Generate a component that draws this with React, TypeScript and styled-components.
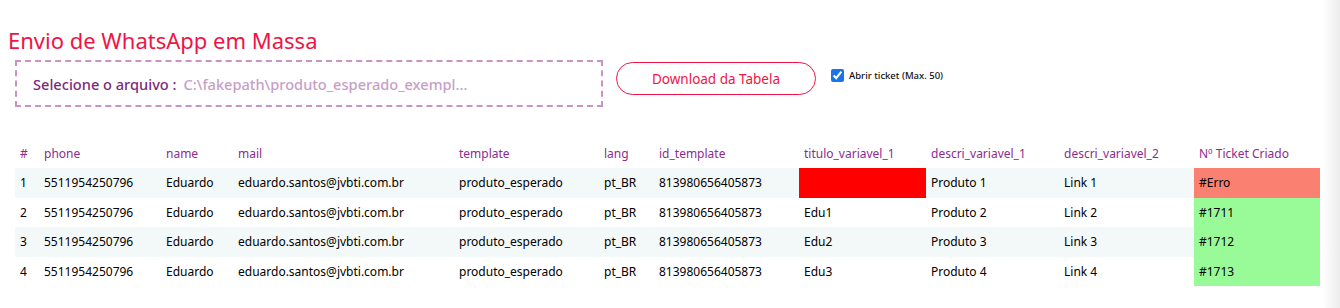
import { FC } from "react";
import styled, { createGlobalStyle } from "styled-components";

const GlobalStyle = createGlobalStyle`
  body {
    margin: 0;
    font-family: "Noto Sans", "Open Sans", sans-serif;
    background: linear-gradient(to right, #ffffff 1323px, #ececec 1340px);
    min-height: 308px;
  }
`;

const Page = styled.div`
  padding: 26px 0 0 0;
`;

const Title = styled.h1`
  margin: 0 0 0 8px;
  font-size: 22px;
  line-height: 28px;
  font-weight: 400;
  color: #f01446;
`;

const Toolbar = styled.div`
  display: flex;
  align-items: flex-start;
  margin: 6px 0 0 15px;
`;

const FileBox = styled.label`
  box-sizing: border-box;
  width: 588px;
  height: 47px;
  border: 2px dashed #c993c6;
  display: flex;
  align-items: center;
  padding: 0 16px;
  gap: 7px;
  font-size: 14.6px;
  font-weight: 500;
  white-space: nowrap;
`;

const FileLabel = styled.span`
  color: #7b2a7b;
`;

const FileName = styled.span`
  color: #c79ec7;
`;

const DownloadButton = styled.button`
  margin: 2px 0 0 13px;
  width: 200px;
  height: 33px;
  border: 1px solid #f01446;
  border-radius: 17px;
  background: #fff;
  color: #f01446;
  font-family: inherit;
  font-size: 13.5px;
`;

const TicketCheck = styled.label`
  display: flex;
  align-items: flex-start;
  gap: 5px;
  margin: 9px 0 0 15px;
  font-size: 9.5px;
  font-weight: 500;
  color: #111;

  input {
    margin: 0;
    width: 13px;
    height: 13px;
    accent-color: #1a73e8;
  }
`;

const Table = styled.table`
  margin: 31px 0 0 15px;
  border-collapse: collapse;
  table-layout: fixed;
  width: 1305px;
  font-size: 12px;
`;

const HeadCell = styled.th`
  height: 30px;
  padding: 0 5px;
  text-align: left;
  font-weight: 400;
  color: #8e2c8e;
  vertical-align: middle;
`;

const Row = styled.tr<{ $striped: boolean }>`
  height: 29.5px;
  background: ${(p) => (p.$striped ? "#f3f8f8" : "#fff")};
`;

const Cell = styled.td<{ $bg?: string }>`
  padding: 0 5px;
  color: #000;
  white-space: nowrap;
  overflow: hidden;
  background: ${(p) => p.$bg ?? "transparent"};
`;

const columns = [
  { key: "#", width: 24 },
  { key: "phone", width: 122 },
  { key: "name", width: 72 },
  { key: "mail", width: 221 },
  { key: "template", width: 145 },
  { key: "lang", width: 55 },
  { key: "id_template", width: 145 },
  { key: "titulo_variavel_1", width: 127 },
  { key: "descri_variavel_1", width: 133 },
  { key: "descri_variavel_2", width: 135 },
  { key: "Nº Ticket Criado", width: 126 },
];

const rows = [
  { titulo: "", descri1: "Produto 1", descri2: "Link 1", ticket: "#Erro", error: true },
  { titulo: "Edu1", descri1: "Produto 2", descri2: "Link 2", ticket: "#1711", error: false },
  { titulo: "Edu2", descri1: "Produto 3", descri2: "Link 3", ticket: "#1712", error: false },
  { titulo: "Edu3", descri1: "Produto 4", descri2: "Link 4", ticket: "#1713", error: false },
];

const App: FC = () => {
  return (
    <Page>
      <GlobalStyle />
      <Title>Envio de WhatsApp em Massa</Title>
      <Toolbar>
        <FileBox>
          <FileLabel>Selecione o arquivo :</FileLabel>
          <FileName>C:\fakepath\produto_esperado_exempl...</FileName>
        </FileBox>
        <DownloadButton>Download da Tabela</DownloadButton>
        <TicketCheck>
          <input type="checkbox" defaultChecked />
          Abrir ticket (Max. 50)
        </TicketCheck>
      </Toolbar>
      <Table>
        <colgroup>
          {columns.map((c) => (
            <col key={c.key} style={{ width: c.width }} />
          ))}
        </colgroup>
        <thead>
          <tr>
            {columns.map((c) => (
              <HeadCell key={c.key}>{c.key}</HeadCell>
            ))}
          </tr>
        </thead>
        <tbody>
          {rows.map((r, i) => (
            <Row key={i} $striped={i % 2 === 0}>
              <Cell>{i + 1}</Cell>
              <Cell>5511954250796</Cell>
              <Cell>Eduardo</Cell>
              <Cell>eduardo.santos@jvbti.com.br</Cell>
              <Cell>produto_esperado</Cell>
              <Cell>pt_BR</Cell>
              <Cell>813980656405873</Cell>
              <Cell $bg={r.titulo ? undefined : "#ff0000"}>{r.titulo}</Cell>
              <Cell>{r.descri1}</Cell>
              <Cell>{r.descri2}</Cell>
              <Cell $bg={r.error ? "#fa8072" : "#98fb98"}>{r.ticket}</Cell>
            </Row>
          ))}
        </tbody>
      </Table>
    </Page>
  );
};

export default App;
